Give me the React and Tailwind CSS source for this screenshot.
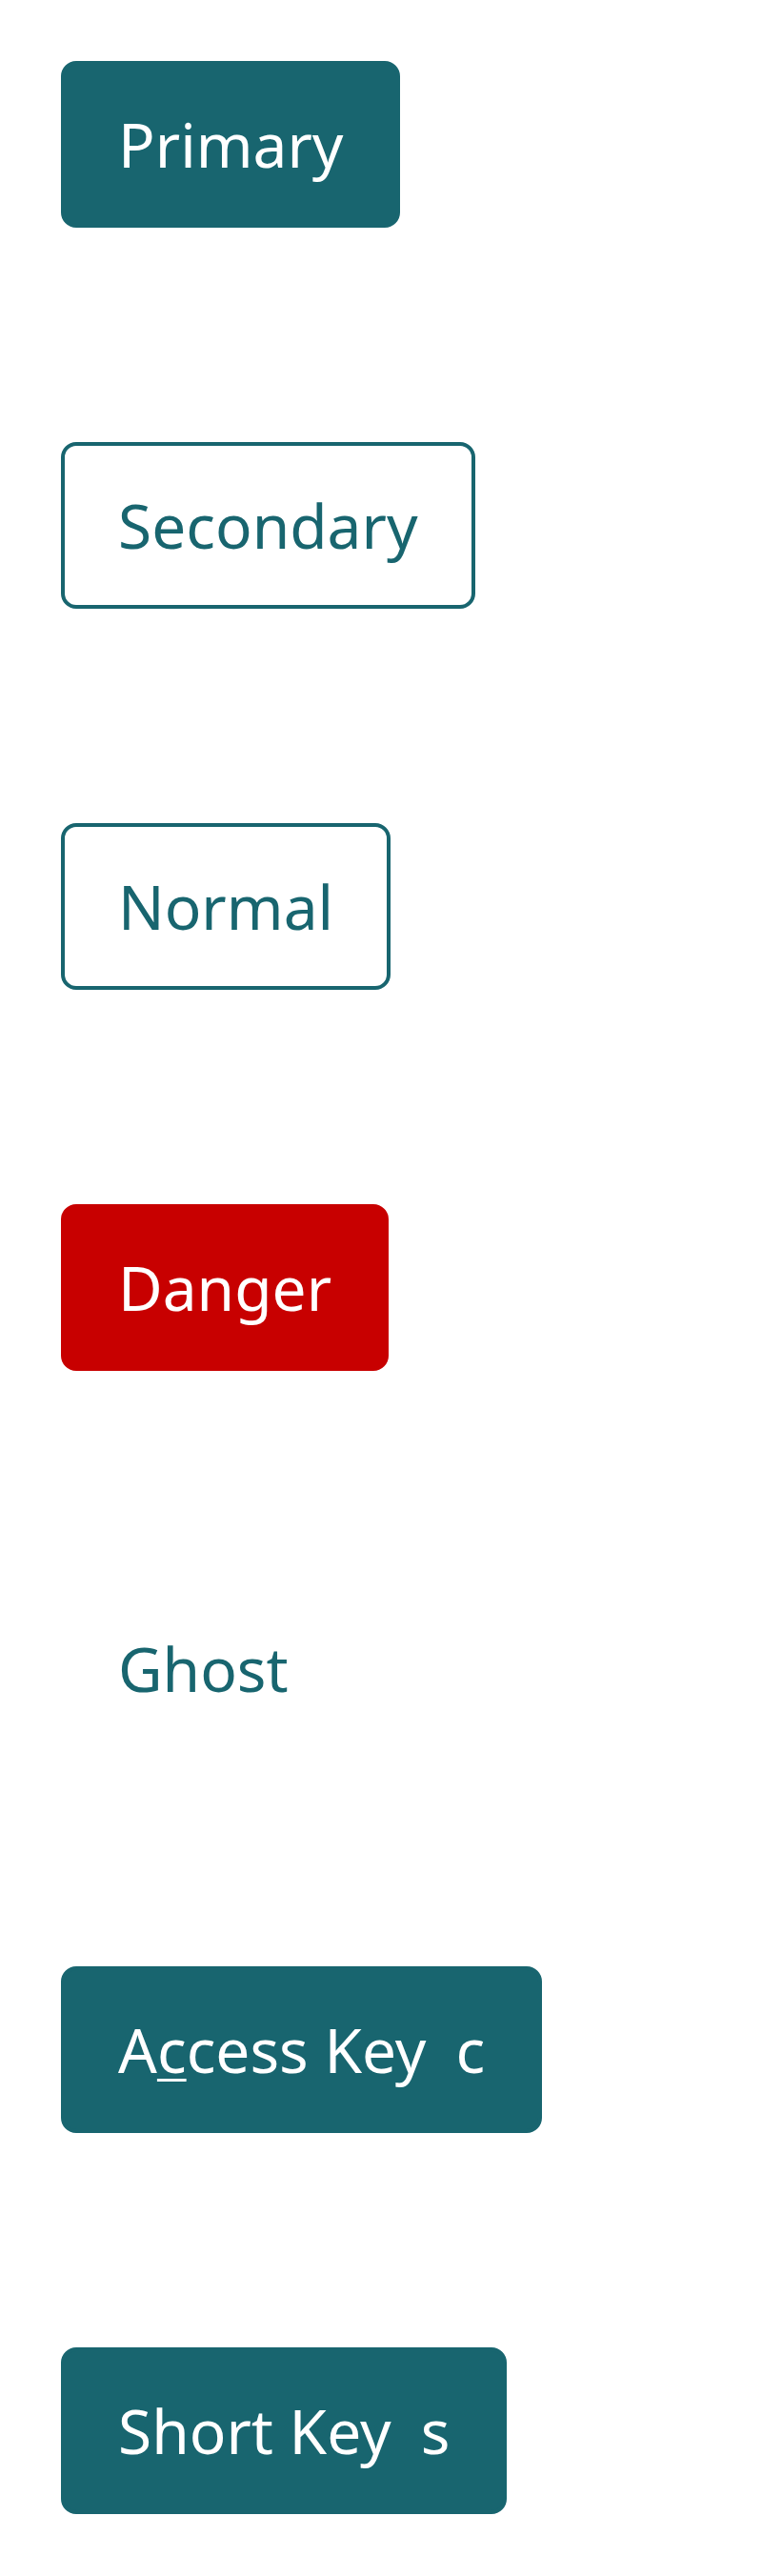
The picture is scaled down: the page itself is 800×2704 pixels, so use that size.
const base =
  "h-[175px] rounded-[16px] border-4 px-[56px] flex items-center justify-center text-[64px] whitespace-nowrap";

export default function App() {
  return (
    <div
      className="bg-white p-16 flex flex-col items-start gap-[225px]"
      style={{ fontFamily: '"Noto Sans", "Open Sans", sans-serif' }}
    >
      <button className={`${base} bg-[#18656f] border-[#18656f] text-white`}>Primary</button>
      <button className={`${base} bg-white border-[#18656f] text-[#18656f]`}>Secondary</button>
      <button className={`${base} bg-white border-[#18656f] text-[#18656f]`}>Normal</button>
      <button className={`${base} bg-[#c80000] border-[#c80000] text-white`}>Danger</button>
      <button className={`${base} bg-transparent border-transparent text-[#18656f]`}>Ghost</button>
      <button className={`${base} bg-[#18656f] border-[#18656f] text-white`}>
        <span>
          A<span className="underline decoration-[3px] underline-offset-[6px]">c</span>cess Key
        </span>
        <span className="ml-[31px]">c</span>
      </button>
      <button className={`${base} bg-[#18656f] border-[#18656f] text-white`}>
        <span>Short Key</span>
        <span className="ml-[31px]">s</span>
      </button>
    </div>
  );
}
